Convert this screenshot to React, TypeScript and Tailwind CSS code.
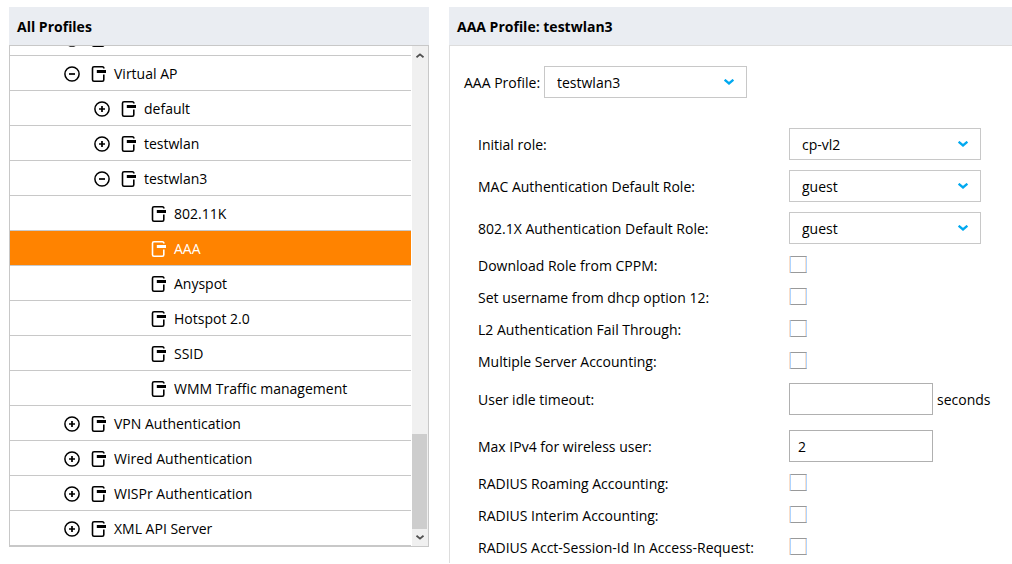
import { useState, type ReactNode } from "react";

type TreeNode = { name: string; level: 1 | 2 | 3; state?: "open" | "closed" };

const nodes: TreeNode[] = [
  { name: "Virtual AP", level: 1, state: "open" },
  { name: "default", level: 2, state: "closed" },
  { name: "testwlan", level: 2, state: "closed" },
  { name: "testwlan3", level: 2, state: "open" },
  { name: "802.11K", level: 3 },
  { name: "AAA", level: 3 },
  { name: "Anyspot", level: 3 },
  { name: "Hotspot 2.0", level: 3 },
  { name: "SSID", level: 3 },
  { name: "WMM Traffic management", level: 3 },
  { name: "VPN Authentication", level: 1, state: "closed" },
  { name: "Wired Authentication", level: 1, state: "closed" },
  { name: "WISPr Authentication", level: 1, state: "closed" },
  { name: "XML API Server", level: 1, state: "closed" },
];

const indent = { 1: "pl-[54px]", 2: "pl-[84px]", 3: "pl-[141px]" };

function ToggleIcon({ open }: { open: boolean }) {
  return (
    <svg className="mr-[11px] size-4 shrink-0" viewBox="0 0 16 16" fill="none" stroke="currentColor" strokeWidth="1.5">
      <circle cx="8" cy="8" r="7.1" />
      <path d={open ? "M5 8h6" : "M5 8h6M8 5v6"} strokeWidth="1.7" />
    </svg>
  );
}

function ProfileIcon() {
  return (
    <svg className="mr-2 h-4 w-[15px] shrink-0" viewBox="0 0 15 16" fill="none" stroke="currentColor">
      <path d="M12.9 2.6Q12.9 .8 11.3 .8H3Q1.5 .8 1.5 2.3V13.7Q1.5 15.2 3 15.2H11.3Q12.8 15.2 12.8 13.7V8.6" strokeWidth="1.6" />
      <path d="M5.8 5.5H15" strokeWidth="3" />
    </svg>
  );
}

function Chevron({ className }: { className: string }) {
  return (
    <svg className={className} viewBox="0 0 10 6" fill="none" stroke="currentColor" strokeWidth="2.4">
      <path d="M.6 .8 5 4.4 9.4 .8" />
    </svg>
  );
}

function Select({ id, value, className }: { id: string; value: string; className: string }) {
  return (
    <div className={`relative ${className}`}>
      <select id={id} defaultValue={value} className="h-8 w-full appearance-none border border-[#c8c8c8] bg-white pl-3 pr-8 pt-0.5">
        <option>{value}</option>
      </select>
      <Chevron className="pointer-events-none absolute right-[13px] top-[13px] h-[6px] w-[10px] text-[#01a9f0]" />
    </div>
  );
}

function Field({ id, label, children }: { id: string; label: string; children: ReactNode }) {
  return (
    <div className="flex min-h-8 items-center">
      <label htmlFor={id} className="w-[311px] shrink-0 pt-0.5">
        {label}
      </label>
      {children}
    </div>
  );
}

function CheckField({ id, label }: { id: string; label: string }) {
  return (
    <Field id={id} label={label}>
      <input
        id={id}
        type="checkbox"
        className="mb-0.5 ml-px size-[17px] appearance-none border border-x-[#aed4ff] border-y-[#999] bg-white shadow-[-1px_0_0_#fadfca,inset_-1px_0_0_#fadfca] checked:bg-[#01a9e8]"
      />
    </Field>
  );
}

const textBox = "h-8 w-36 border border-[#b0b0b0] bg-white px-2";

export default function App() {
  const [selected, setSelected] = useState("AAA");

  return (
    <div className="flex gap-5 bg-white pl-[9px] pt-[7px] font-['Open_Sans','Noto_Sans',sans-serif] text-sm leading-5 text-black">
      <section className="w-[420px] shrink-0">
        <h2 className="flex h-[38px] items-center bg-[#eaedf2] px-2 pt-0.5 font-bold">All Profiles</h2>
        <div className="flex border border-[#c8c8c8]">
          <ul className="mr-px flex-1">
            <li className="flex h-[10px] items-end overflow-hidden border-b border-[#c8c8c8] pl-[54px]" aria-hidden="true">
              <div className="flex h-[34px] shrink-0 items-center pt-0.5">
                <ToggleIcon open={false} />
                <ProfileIcon />
              </div>
            </li>
            {nodes.map((n) => (
              <li key={n.name} className="border-b border-[#c8c8c8]">
                <button
                  type="button"
                  onClick={() => setSelected(n.name)}
                  className={`flex h-[34px] w-full items-center pt-0.5 text-left ${indent[n.level]} ${
                    selected === n.name ? "bg-[#ff8300] text-white" : ""
                  }`}
                >
                  {n.state && <ToggleIcon open={n.state === "open"} />}
                  <ProfileIcon />
                  {n.name}
                </button>
              </li>
            ))}
          </ul>
          <div className="flex w-4 flex-col bg-[#f0f0f0] pr-px text-[#505050]">
            <Chevron className="mx-auto mt-[7px] h-[5px] w-2 rotate-180" />
            <div className="mt-auto h-[95px] bg-[#cdcdcd]" />
            <Chevron className="mx-auto my-[6px] h-[5px] w-2" />
          </div>
        </div>
      </section>

      <section className="min-w-0 flex-1">
        <h2 className="flex h-[38px] items-center bg-[#eaedf2] px-2 pt-0.5 font-bold">AAA Profile: testwlan3</h2>
        <form className="border-l border-t border-[#ddd] pl-[14px] pt-5">
          <div className="flex items-center">
            <label htmlFor="profile" className="w-20 shrink-0 pt-0.5">
              AAA Profile:
            </label>
            <Select id="profile" value="testwlan3" className="w-[203px]" />
          </div>
          <div className="pl-[14px] pt-[30px]">
            <div className="flex flex-col gap-[10px] pb-[5px]">
              <Field id="initial" label="Initial role:">
                <Select id="initial" value="cp-vl2" className="w-48" />
              </Field>
              <Field id="mac" label="MAC Authentication Default Role:">
                <Select id="mac" value="guest" className="w-48" />
              </Field>
              <Field id="dot1x" label="802.1X Authentication Default Role:">
                <Select id="dot1x" value="guest" className="w-48" />
              </Field>
            </div>
            <CheckField id="cppm" label="Download Role from CPPM:" />
            <CheckField id="dhcp" label="Set username from dhcp option 12:" />
            <CheckField id="l2" label="L2 Authentication Fail Through:" />
            <CheckField id="multi" label="Multiple Server Accounting:" />
            <div className="flex flex-col gap-[15px] pb-[5px] pt-[6px]">
              <Field id="idle" label="User idle timeout:">
                <input id="idle" type="text" className={textBox} />
                <span className="ml-1 pt-0.5">seconds</span>
              </Field>
              <Field id="ipv4" label="Max IPv4 for wireless user:">
                <input id="ipv4" type="text" defaultValue="2" className={textBox} />
              </Field>
            </div>
            <CheckField id="roaming" label="RADIUS Roaming Accounting:" />
            <CheckField id="interim" label="RADIUS Interim Accounting:" />
            <CheckField id="acct" label="RADIUS Acct-Session-Id In Access-Request:" />
          </div>
        </form>
      </section>
    </div>
  );
}
